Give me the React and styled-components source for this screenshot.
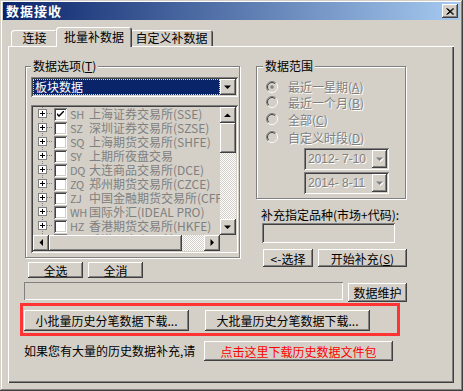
import React from 'react';
import styled, { createGlobalStyle } from 'styled-components';

const face = '#d4d0c8';

const GlobalStyle = createGlobalStyle`
  html, body { margin: 0; padding: 0; background: ${face}; }
  body {
    font-family: "Noto Sans CJK SC", "Liberation Sans", sans-serif;
    font-size: 12px;
    color: #000;
  }
  * { box-sizing: border-box; }
`;

const raised = `
  box-shadow: inset -1px -1px #404040, inset 1px 1px #fff,
    inset -2px -2px #808080, inset 2px 2px ${face};
`;

const sunken = `
  box-shadow: inset 1px 1px #808080, inset -1px -1px #fff,
    inset 2px 2px #404040, inset -2px -2px ${face};
`;

const Window = styled.div`
  width: 463px;
  height: 391px;
  background: ${face};
  padding: 2px 3px 0;
  box-shadow: inset -1px -1px #404040, inset 1px 1px ${face},
    inset -2px -2px #808080, inset 2px 2px #fff;
  display: flex;
  flex-direction: column;
`;

const TitleBar = styled.div`
  height: 18px;
  display: flex;
  align-items: center;
  justify-content: space-between;
  padding: 0 2px 0 3px;
  background: linear-gradient(to right, #0a246a, #a6caf0);
`;

const Title = styled.span`
  color: #fff;
  font-weight: bold;
  font-size: 13px;
  letter-spacing: 1px;
  line-height: 18px;
`;

const CloseButton = styled.div`
  width: 16px;
  height: 14px;
  background: ${face};
  ${raised}
  display: flex;
  align-items: center;
  justify-content: center;
`;

const TabRow = styled.div`
  display: flex;
  align-items: flex-end;
  height: 19px;
  margin-top: 7px;
  padding-left: 8px;
`;

const Tab = styled.div`
  width: ${p => p.$w}px;
  height: ${p => (p.$active ? 20 : 16)}px;
  margin: 0 ${p => (p.$active ? -2 : 0)}px ${p => (p.$active ? -1 : 0)}px;
  padding-top: ${p => (p.$active ? 2 : 0)}px;
  position: relative;
  z-index: ${p => (p.$active ? 1 : 0)};
  display: flex;
  justify-content: center;
  line-height: 16px;
  background: ${face};
  border-radius: 3px 3px 0 0;
  box-shadow: inset 1px 1px #fff, inset -1px 0 #404040, inset -2px 0 #808080;
`;

const Panel = styled.div`
  margin-left: 5px;
  width: 446px;
  height: 337px;
  padding-top: 20px;
  box-shadow: inset 1px 1px #fff, inset -1px -1px #404040, inset -2px -2px #808080;
  display: flex;
  flex-direction: column;
`;

const Upper = styled.div`
  display: flex;
  align-items: flex-start;
`;

const LeftCol = styled.div`
  margin-left: 17px;
  width: 215px;
  display: flex;
  flex-direction: column;
`;

const RightCol = styled.div`
  margin-left: 16px;
  width: 152px;
  display: flex;
  flex-direction: column;
`;

const GroupBox = styled.div`
  position: relative;
  width: ${p => p.$w}px;
  height: ${p => p.$h}px;
  border: 1px solid #808080;
  box-shadow: inset 1px 1px #fff, 1px 1px #fff;
  padding: ${p => p.$pad};
`;

const Legend = styled.span`
  position: absolute;
  top: -8px;
  left: ${p => p.$left}px;
  padding: 0 2px;
  background: ${face};
  line-height: 14px;
`;

const Combo = styled.div`
  width: 207px;
  height: 20px;
  background: #fff;
  ${sunken}
  padding: 2px;
  display: flex;
`;

const ComboValue = styled.div`
  flex: 1;
  background: #0a246a;
  color: #fff;
  border: 1px dotted #e8e070;
  line-height: 14px;
  padding-left: 1px;
`;

const ArrowButton = styled.div`
  width: ${p => p.$w || 16}px;
  height: ${p => p.$h || 16}px;
  background: ${face};
  ${raised}
  display: flex;
  align-items: center;
  justify-content: center;
  flex-shrink: 0;
`;

const ListBox = styled.div`
  margin-top: 8px;
  width: 207px;
  height: 148px;
  padding: 2px;
  background: ${face};
  ${sunken}
  display: grid;
  grid-template-columns: 1fr 16px;
  grid-template-rows: 1fr 16px;
`;

const ListContent = styled.div`
  overflow: hidden;
`;

const ListRow = styled.div`
  height: 14px;
  display: flex;
  align-items: center;
  white-space: nowrap;
  color: #808080;
  line-height: 14px;
`;

const CheckBox = styled.div`
  width: 13px;
  height: 13px;
  margin-left: 1px;
  background: #fff;
  ${sunken}
  display: flex;
  align-items: center;
  justify-content: center;
  flex-shrink: 0;
`;

const Code = styled.span`
  width: 19px;
  margin-left: 3px;
  flex-shrink: 0;
  font-size: 11px;
  letter-spacing: -0.3px;
`;

const VScroll = styled.div`
  display: flex;
  flex-direction: column;
`;

const HScroll = styled.div`
  display: flex;
`;

const Thumb = styled.div`
  ${p => (p.$vertical ? `height: ${p.$size}px;` : `width: ${p.$size}px;`)}
  flex-shrink: 0;
  background: ${face};
  ${raised}
`;

const Track = styled.div`
  flex: 1;
  background: repeating-conic-gradient(${face} 0 25%, #fff 0 50%) 0 0 / 2px 2px;
`;

const Corner = styled.div`
  background: ${face};
`;

const ButtonRow = styled.div`
  display: flex;
  gap: ${p => p.$gap}px;
  margin: ${p => p.$margin};
`;

const Button = styled.div`
  width: ${p => p.$w}px;
  height: ${p => p.$h}px;
  margin-top: ${p => p.$top || 0}px;
  background: ${face};
  ${raised}
  display: flex;
  align-items: center;
  justify-content: center;
  white-space: nowrap;
  color: ${p => p.$color || '#000'};
  font-size: 12px;
  flex-shrink: 0;
`;

const RadioRow = styled.div`
  height: ${p => p.$h}px;
  display: flex;
  align-items: center;
  gap: 10px;
`;

const Disabled = styled.span`
  color: #808080;
  text-shadow: 1px 1px #fff;
  white-space: nowrap;
`;

const Key = styled.u`
  text-underline-offset: 1px;
`;

const DateBox = styled.div`
  margin: ${p => p.$top}px 0 0 38px;
  width: 85px;
  height: 22px;
  padding: 2px 2px 2px 4px;
  background: ${face};
  ${sunken}
  display: flex;
  align-items: center;
  justify-content: space-between;
  font-family: "Liberation Sans", sans-serif;
  font-size: 12px;
`;

const FieldLabel = styled.div`
  margin: 9px 0 0 5px;
  line-height: 14px;
  white-space: nowrap;
`;

const Field = styled.div`
  margin: ${p => p.$margin};
  width: ${p => p.$w}px;
  height: ${p => p.$h}px;
  background: ${face};
  ${sunken}
`;

const StatusBox = styled.div`
  width: 319px;
  height: 18px;
  background: ${face};
  box-shadow: inset 1px 1px #808080, inset -1px -1px #fff;
`;

const Row = styled.div`
  display: flex;
  align-items: flex-start;
  margin: ${p => p.$margin};
  gap: ${p => p.$gap || 0}px;
`;

const Highlight = styled.div`
  margin: 1px 0 0 12px;
  width: 380px;
  height: 33px;
  border: 3px solid #f33;
  padding: 4px 0 0 1px;
  display: flex;
  gap: 16px;
`;

const Note = styled.span`
  width: 180px;
  line-height: 20px;
  white-space: nowrap;
`;

const Arrow = ({ dir, color = '#000', shadow }) => {
  const shapes = {
    up: '0,4 7,4 3.5,0.5',
    down: '0,0.5 7,0.5 3.5,4',
    left: '4,0 4,7 0.5,3.5',
    right: '0.5,0 0.5,7 4,3.5',
  };
  const vertical = dir === 'up' || dir === 'down';
  return (
    <svg width={vertical ? 8 : 5} height={vertical ? 5 : 8} viewBox={vertical ? '0 0 8 5' : '0 0 5 8'} style={{ overflow: 'visible' }}>
      {shadow && <polygon points={shapes[dir]} fill="#fff" transform="translate(1 1)" />}
      <polygon points={shapes[dir]} fill={color} />
    </svg>
  );
};

const TreeNode = () => (
  <svg width="20" height="14" viewBox="0 0 20 14" style={{ flexShrink: 0 }}>
    <line x1="9.5" y1="0" x2="9.5" y2="14" stroke="#808080" strokeDasharray="1 1" />
    <rect x="5.5" y="2.5" width="8" height="8" fill="#fff" stroke="#808080" />
    <line x1="7" y1="6.5" x2="12" y2="6.5" stroke="#000" />
    <line x1="9.5" y1="4" x2="9.5" y2="9" stroke="#000" />
    <line x1="14" y1="6.5" x2="20" y2="6.5" stroke="#808080" strokeDasharray="1 1" />
  </svg>
);

const Radio = ({ checked }) => (
  <svg width="12" height="12" viewBox="0 0 12 12" style={{ flexShrink: 0 }}>
    <circle cx="6" cy="6" r="4.5" fill={face} />
    <path d="M2.1 9.9 A5.5 5.5 0 0 1 9.9 2.1" stroke="#808080" fill="none" />
    <path d="M9.9 2.1 A5.5 5.5 0 0 1 2.1 9.9" stroke="#fff" fill="none" />
    <path d="M2.8 9.2 A4.5 4.5 0 0 1 9.2 2.8" stroke="#404040" fill="none" />
    <path d="M9.2 2.8 A4.5 4.5 0 0 1 2.8 9.2" stroke={face} fill="none" />
    {checked && <circle cx="6" cy="6" r="1.8" fill="#808080" />}
  </svg>
);

const markets = [
  ['SH', '上海证券交易所(SSE)', true],
  ['SZ', '深圳证券交易所(SZSE)'],
  ['SQ', '上海期货交易所(SHFE)'],
  ['SY', '上期所夜盘交易'],
  ['DQ', '大连商品交易所(DCE)'],
  ['ZQ', '郑州期货交易所(CZCE)'],
  ['ZJ', '中国金融期货交易所(CFFEX)'],
  ['WH', '国际外汇(IDEAL PRO)'],
  ['HZ', '香港期货交易所(HKFE)'],
  ['HK', '香港联合交易所(HKEX)'],
];

const ranges = [
  { label: '最近一星期', key: 'A', h: 15, checked: true },
  { label: '最近一个月', key: 'B', h: 16 },
  { label: '全部', key: 'C', h: 18 },
  { label: '自定义时段', key: 'D', h: 18 },
];

const dates = ['2012- 7-10', '2014- 8-11'];

export default function App() {
  return (
    <>
      <GlobalStyle />
      <Window>
        <TitleBar>
          <Title>数据接收</Title>
          <CloseButton>
            <svg width="8" height="7" viewBox="0 0 8 7">
              <path d="M0.5 0.5 L7 6.5 M1.5 0.5 L8 6.5 M7 0.5 L0.5 6.5 M8 0.5 L1.5 6.5" stroke="#000" strokeWidth="1" />
            </svg>
          </CloseButton>
        </TitleBar>

        <TabRow>
          <Tab $w={47}>连接</Tab>
          <Tab $w={76} $active>批量补数据</Tab>
          <Tab $w={83}>自定义补数据</Tab>
        </TabRow>

        <Panel>
          <Upper>
            <LeftCol>
              <GroupBox $w={215} $h={192} $pad="10px 0 0 5px">
                <Legend $left={5}>
                  数据选项(<Key>T</Key>)
                </Legend>
                <Combo>
                  <ComboValue>板块数据</ComboValue>
                  <ArrowButton>
                    <Arrow dir="down" />
                  </ArrowButton>
                </Combo>
                <ListBox>
                  <ListContent>
                    {markets.map(([code, name, checked]) => (
                      <ListRow key={code}>
                        <TreeNode />
                        <CheckBox>
                          {checked && (
                            <svg width="7" height="7" viewBox="0 0 7 7">
                              <path d="M0 2 L0 4 L2 6 L7 1 L7 -1 L2 4 Z" fill="#000" />
                            </svg>
                          )}
                        </CheckBox>
                        <Code>{code}</Code>
                        <span>{name}</span>
                      </ListRow>
                    ))}
                  </ListContent>
                  <VScroll>
                    <ArrowButton>
                      <Arrow dir="up" />
                    </ArrowButton>
                    <Thumb $vertical $size={30} />
                    <Track />
                    <ArrowButton>
                      <Arrow dir="down" />
                    </ArrowButton>
                  </VScroll>
                  <HScroll>
                    <ArrowButton>
                      <Arrow dir="left" />
                    </ArrowButton>
                    <Thumb $size={133} />
                    <Track />
                    <ArrowButton>
                      <Arrow dir="right" />
                    </ArrowButton>
                  </HScroll>
                  <Corner />
                </ListBox>
              </GroupBox>
              <ButtonRow $gap={5} $margin="4px 0 0 3px">
                <Button $w={55} $h={16}>全选</Button>
                <Button $w={55} $h={16}>全消</Button>
              </ButtonRow>
            </LeftCol>

            <RightCol>
              <GroupBox $w={150} $h={133} $pad="12px 0 0 9px">
                <Legend $left={6}>数据范围</Legend>
                {ranges.map(r => (
                  <RadioRow key={r.key} $h={r.h}>
                    <Radio checked={r.checked} />
                    <Disabled>
                      {r.label}(<Key>{r.key}</Key>)
                    </Disabled>
                  </RadioRow>
                ))}
                {dates.map(d => (
                  <DateBox key={d} $top={2}>
                    <Disabled>{d}</Disabled>
                    <ArrowButton $w={15} $h={18}>
                      <Arrow dir="down" color="#808080" shadow />
                    </ArrowButton>
                  </DateBox>
                ))}
              </GroupBox>
              <FieldLabel>补充指定品种(市场+代码):</FieldLabel>
              <Field $w={133} $h={20} $margin="1px 0 0 6px" />
              <ButtonRow $gap={5} $margin="6px 0 0 7px">
                <Button $w={50} $h={18}>&lt;-选择</Button>
                <Button $w={89} $h={18}>
                  开始补充(<Key>S</Key>)
                </Button>
              </ButtonRow>
            </RightCol>
          </Upper>

          <Row $margin="4px 0 0 16px" $gap={5}>
            <StatusBox />
            <Button $w={59} $h={19} $top={1}>数据维护</Button>
          </Row>

          <Highlight>
            <Button $w={165} $h={21}>小批量历史分笔数据下载...</Button>
            <Button $w={165} $h={21}>大批量历史分笔数据下载...</Button>
          </Highlight>

          <Row $margin="5px 0 0 16px">
            <Note>如果您有大量的历史数据补充,请</Note>
            <Button $w={189} $h={20} $color="#ff0000">点击这里下载历史数据文件包</Button>
          </Row>
        </Panel>
      </Window>
    </>
  );
}
